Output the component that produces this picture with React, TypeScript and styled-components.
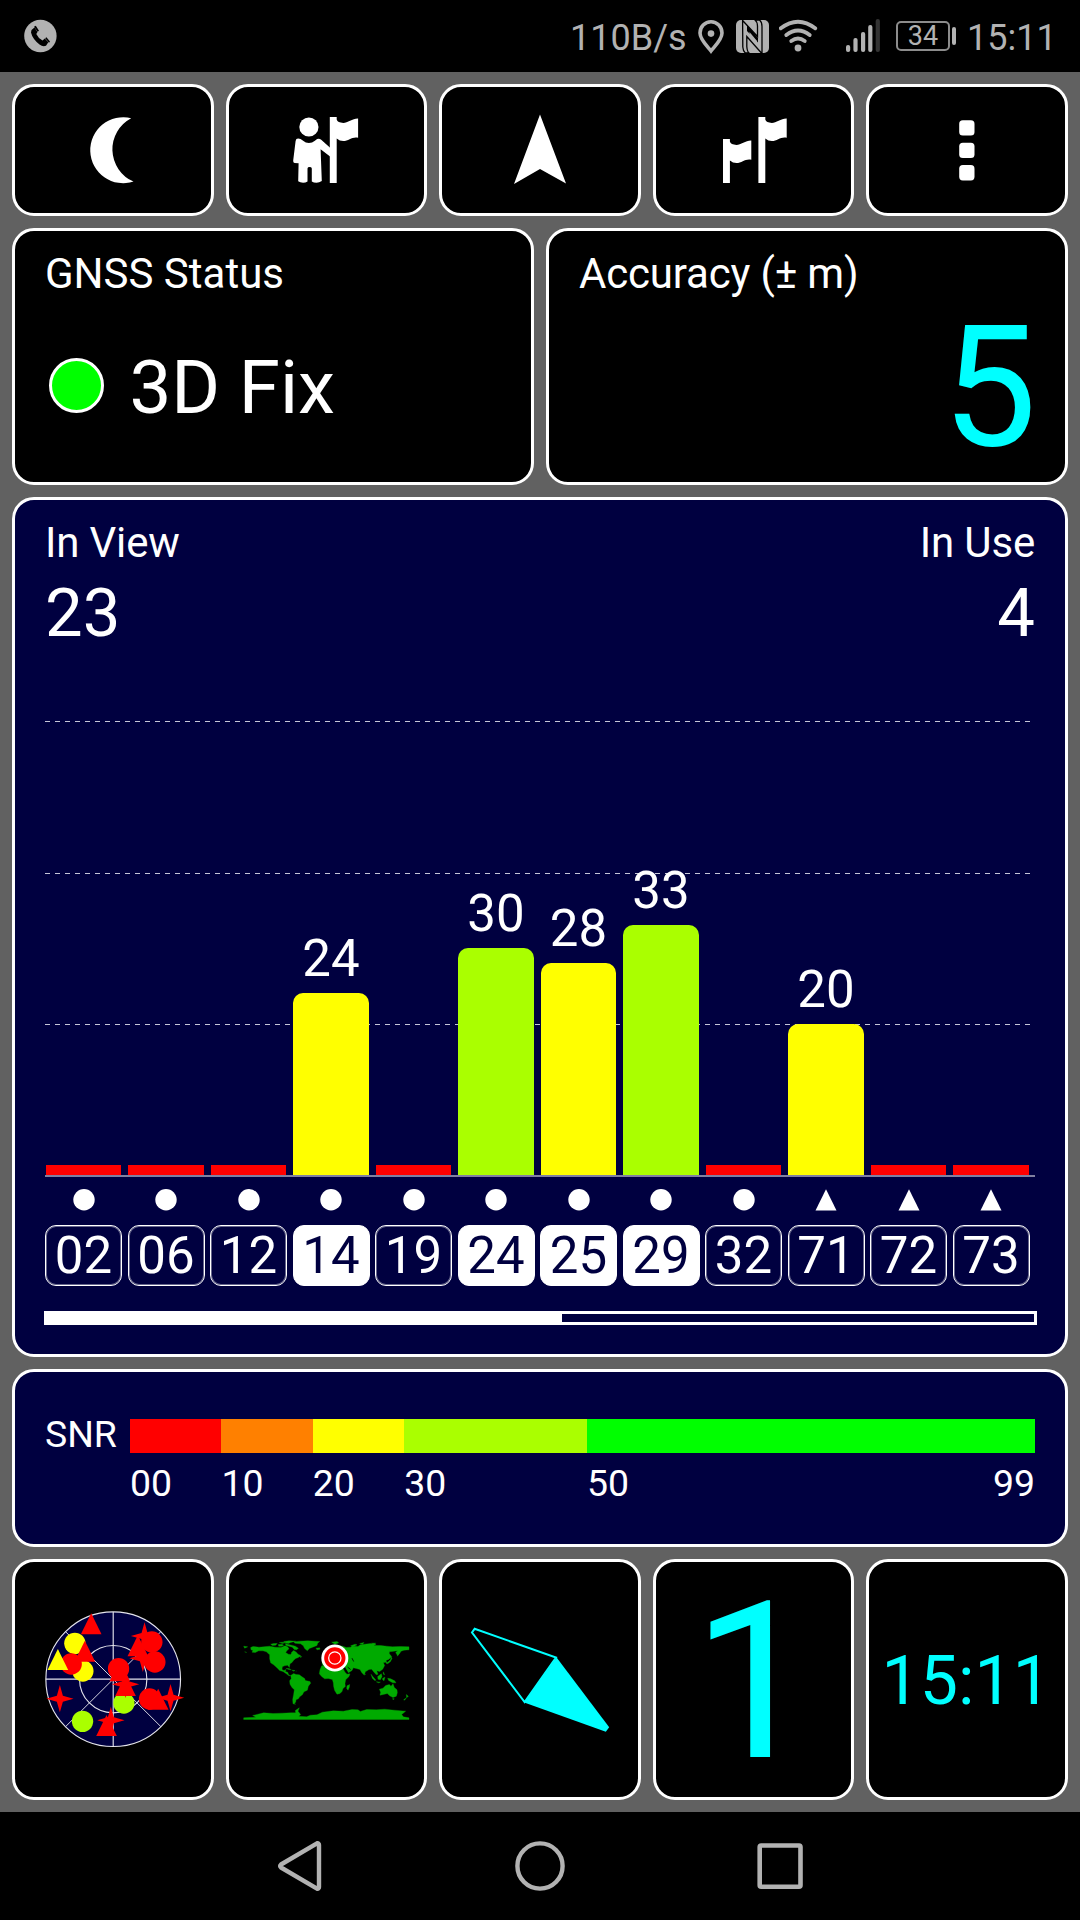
import React from "react";
import styled, { createGlobalStyle } from "styled-components";

const GlobalStyle = createGlobalStyle`
  *, *::before, *::after { box-sizing: border-box; }
  html, body { margin: 0; padding: 0; background: #000; }
`;

const NAVY = "#000040";
const CYAN = "#00ffff";
const GRAY = "#b2b2b2";

const Screen = styled.div`
  width: 1080px;
  height: 1920px;
  display: flex;
  flex-direction: column;
  background: #000;
  color: #fff;
  font-family: Roboto, "Liberation Sans", sans-serif;
  overflow: hidden;
`;

const StatusBar = styled.header`
  height: 72px;
  display: flex;
  align-items: center;
  justify-content: space-between;
  padding: 0 26px 0 24px;
  color: ${GRAY};
`;

const StatusGroup = styled.div`
  display: flex;
  align-items: center;
  height: 72px;
`;

const StatusText = styled.span<{ $width: number }>`
  width: ${(p) => p.$width}px;
  font-size: 36px;
  line-height: 72px;
  padding-top: 3px;
  white-space: nowrap;
`;

const Battery = styled.div`
  width: 54px;
  height: 30px;
  margin-left: 16px;
  border: 2px solid #8c8c8c;
  border-radius: 5px;
  font-size: 27px;
  line-height: 27px;
  text-align: center;
`;

const BatteryTip = styled.div`
  width: 4px;
  height: 18px;
  margin: 0 11px 0 2px;
  border-radius: 2px;
  background: ${GRAY};
`;

const Icon = styled.svg`
  display: block;
  flex: none;
`;

const Dashboard = styled.main`
  height: 1740px;
  padding: 12px;
  background: #616161;
  display: grid;
  grid-template-rows: 132px 257px 860px 178px 241px;
  row-gap: 12px;
`;

const Row = styled.div<{ $columns: number }>`
  display: grid;
  grid-template-columns: repeat(${(p) => p.$columns}, 1fr);
  column-gap: 12px;
`;

const Card = styled.section<{ $navy?: boolean }>`
  min-width: 0;
  border: 3px solid #fff;
  border-radius: 22px;
  background: ${(p) => (p.$navy ? NAVY : "#000")};
`;

const Tile = styled(Card)`
  display: flex;
  align-items: center;
  justify-content: center;
  color: ${CYAN};
`;

const InfoCard = styled(Card)`
  padding: 18px 30px 0;
  display: flex;
  flex-direction: column;
`;

const Title = styled.div<{ $tight?: boolean }>`
  font-size: 42px;
  line-height: 50px;
  letter-spacing: ${(p) => (p.$tight ? "-0.17px" : "0")};
  white-space: nowrap;
`;

const FixRow = styled.div`
  display: flex;
  align-items: center;
  margin-top: 55px;
  padding-left: 3.5px;
`;

const FixDot = styled.div`
  width: 55px;
  height: 55px;
  margin-right: 26px;
  border: 3px solid #fff;
  border-radius: 50%;
  background: #00ff00;
`;

const FixText = styled.div`
  font-size: 74.5px;
  line-height: 56px;
  padding-top: 6px;
`;

const AccuracyValue = styled.div`
  margin: 3px -2px 0 0;
  font-size: 169px;
  line-height: 170px;
  text-align: right;
  color: ${CYAN};
`;

const Counts = styled.div`
  display: flex;
  justify-content: space-between;
`;

const Count = styled.div<{ $end?: boolean }>`
  text-align: ${(p) => (p.$end ? "right" : "left")};
`;

const CountValue = styled.div`
  margin-top: 7px;
  font-size: 67px;
  line-height: 76px;
`;

const dashes =
  "repeating-linear-gradient(90deg, #c6c6d8 0 5px, transparent 5px 10px)";

const Plot = styled.div`
  height: 476px;
  margin-top: 50px;
  display: grid;
  grid-template-columns: repeat(12, 82.5px);
  align-items: end;
  border-bottom: 2px solid #8080a0;
  background-image: ${dashes}, ${dashes}, ${dashes};
  background-size: 985px 1px;
  background-position: 0 20px, 0 172px, 0 323px;
  background-repeat: no-repeat;
`;

const Slot = styled.div`
  width: 77px;
  display: flex;
  flex-direction: column;
  align-items: center;
`;

const BarValue = styled.div`
  font-size: 51px;
  line-height: 52px;
  margin-bottom: 8px;
`;

const Bar = styled.div<{ $color: string; $rounded: boolean }>`
  width: 75.5px;
  border-radius: ${(p) => (p.$rounded ? "10px 10px 0 0" : "0")};
  background: ${(p) => p.$color};
`;

const SatRow = styled.div<{ $gap: number }>`
  margin-top: ${(p) => p.$gap}px;
  display: grid;
  grid-template-columns: repeat(12, 82.5px);
`;

const SymbolCell = styled.div`
  width: 77px;
  display: flex;
  justify-content: center;
`;

const Chip = styled.div<{ $used: boolean }>`
  width: 77px;
  height: 61px;
  border: 1px solid #fff;
  box-shadow: inset 0 0 0 1px rgba(255, 255, 255, 0.4);
  border-radius: 11px;
  background: ${(p) => (p.$used ? "#fff" : "transparent")};
  color: ${(p) => (p.$used ? NAVY : "#fff")};
  font-size: 51px;
  line-height: 59px;
  text-align: center;
`;

const ScrollTrack = styled.div`
  width: 993px;
  height: 14px;
  margin: 25px 0 0 -1px;
  border: 3px solid #fff;
`;

const ScrollThumb = styled.div`
  width: 515px;
  height: 8px;
  background: #fff;
`;

const SnrCard = styled(Card)`
  padding: 47px 30px 0;
  display: grid;
  grid-template-columns: 85px 1fr;
  align-content: start;
  font-size: 37.4px;
`;

const SnrName = styled.div`
  line-height: 34px;
  margin-top: -2px;
`;

const SnrScale = styled.div`
  height: 34px;
  display: grid;
  grid-template-columns: 10fr 10fr 10fr 20fr 49fr;
`;

const SnrBand = styled.div<{ $color: string }>`
  background: ${(p) => p.$color};
`;

const SnrLabels = styled(SnrScale)`
  grid-column: 2;
  height: 40px;
  line-height: 40px;
  margin-top: 10px;
`;

const SnrLabel = styled.div`
  display: flex;
  justify-content: space-between;
`;

const BigDigit = styled.div`
  font-size: 218.5px;
  line-height: 219px;
  padding-top: 6px;
`;

const Clock = styled.div`
  font-size: 68px;
  line-height: 80px;
  padding: 2px 2px 0 0;
`;

const NavBar = styled.nav`
  height: 108px;
  display: flex;
  align-items: center;
  justify-content: space-between;
  padding: 0 270px;
`;

type Sat = { id: string; snr: number; used?: boolean; glonass?: boolean };

const sats: Sat[] = [
  { id: "02", snr: 0 },
  { id: "06", snr: 0 },
  { id: "12", snr: 0 },
  { id: "14", snr: 24, used: true },
  { id: "19", snr: 0 },
  { id: "24", snr: 30, used: true },
  { id: "25", snr: 28, used: true },
  { id: "29", snr: 33, used: true },
  { id: "32", snr: 0 },
  { id: "71", snr: 20, glonass: true },
  { id: "72", snr: 0, glonass: true },
  { id: "73", snr: 0, glonass: true },
];

const bands = [
  { color: "#ff0000", label: "00" },
  { color: "#ff8000", label: "10" },
  { color: "#ffff00", label: "20" },
  { color: "#aaff00", label: "30" },
  { color: "#00ff00", label: "50", end: "99" },
];

const snrColor = (v: number) =>
  v >= 30 ? "#aaff00" : v >= 20 ? "#ffff00" : "#ff0000";

const flagPath =
  "M330.2 117H337.1V119.5Q338 122.7 343.7 122.9C348 122.9 353 118.3 358.5 118.5V137.8C353 136.2 349 141 343.7 141Q340 141 337.1 138.5V183H330.2Z";

function PhoneIcon() {
  return (
    <Icon width="33" height="34" viewBox="24 19.5 33 34">
      <circle cx="40.4" cy="36.5" r="16.2" fill={GRAY} />
      <path d="M31.5 30.5L34.5 28L37.5 32.5L36.3 34.6Q38.3 39 42.5 41L44.8 39L48.3 42.7L46 46.2Q43 47.6 39.5 45Q32.5 39.5 31 33Z" fill="#000" />
      <path d="M34 27.3L35.8 26.2L39 31.2L37.6 32.2ZM45.2 38.8L46.4 37.8L50 42L49 43.2Z" fill="#000" />
    </Icon>
  );
}

function StatusIcons() {
  return (
    <>
      <Icon width="30" height="36" viewBox="696 18 30 36">
        <path d="M711 51C707 46 700 39.5 700 33A11 11.3 0 0 1 722 33C722 39.5 715 46 711 51Z" fill="none" stroke={GRAY} strokeWidth="3.6" />
        <circle cx="711" cy="33.6" r="3.3" fill={GRAY} />
      </Icon>
      <Icon width="53" height="36" viewBox="726 18 53 36">
        <rect x="736" y="20" width="33" height="33" rx="5" fill={GRAY} />
        <path d="M742.6 20.5L757.5 36.5V26Q757.2 21.5 755 20H759.5Q762 22 762 26.5V52.5H761L746.8 36.5V46.5Q747.2 51.5 749 53H745.3Q743 51 742.8 47Z" fill="none" stroke="#000" strokeWidth="1.3" />
        <path d="M747 25L758 38V42.5L747 31Z" fill="#000" />
        <path d="M749.5 32V36L757 44.5V41Z" fill={GRAY} />
      </Icon>
      <Icon width="67" height="36" viewBox="779 18 67 36">
        <g fill="none" stroke={GRAY} strokeWidth="3.9" strokeLinecap="round">
          <path d="M780.8 28.3Q798 15.2 815.2 28.3" />
          <path d="M786.3 35Q798 26 809.7 35" />
          <path d="M791.3 41Q798 36 804.7 41" />
        </g>
        <circle cx="798" cy="48" r="3.4" fill={GRAY} />
      </Icon>
      <Icon width="34" height="36" viewBox="846 18 34 36">
        <g fill={GRAY}>
          <rect x="846" y="45" width="4.2" height="7" rx="2" />
          <rect x="853.4" y="38" width="4.2" height="14" rx="2" />
          <rect x="861" y="32" width="4.2" height="20" rx="2" />
          <rect x="868.2" y="25" width="4.2" height="27" rx="2" />
          <rect x="875.7" y="19" width="4.2" height="33" rx="2" fill="#333" />
        </g>
      </Icon>
    </>
  );
}

function Toolbar() {
  return (
    <Row $columns={5}>
      <Tile>
        <Icon width="120" height="100" viewBox="52.8 100 120 100" fill="#fff">
          <path d="M131 118.2A33 33 0 1 0 133.3 181.6A35.2 35.2 0 0 1 131 118.2Z" />
        </Icon>
      </Tile>
      <Tile>
        <Icon width="120" height="100" viewBox="266.4 100 120 100" fill="#fff">
          <circle cx="309.3" cy="127" r="9.6" />
          <path d="M296 141Q296.3 138.6 298.5 138.6Q301 138.6 303.5 140.7Q306 143 309.3 143Q312.6 143 315.3 140.7L317.5 139Q319.6 138 321.6 139.7L330.8 148V156.7L321 149.3L322.2 181Q319.5 182.7 317 182.7Q314 182.7 312.2 181.5V168.4Q312 167 310 167Q308 167 307.9 168.4V181.5Q306 182.7 303.5 182.7Q300.5 182.7 298.6 181.3L299 163.2L295 163Q293.3 162.6 293.6 160.5Z" />
          <path d={flagPath} />
        </Icon>
      </Tile>
      <Tile>
        <Icon width="120" height="100" viewBox="480 100 120 100" fill="#fff">
          <path d="M540 114.5L566 183.5L540 169L514 184Z" />
        </Icon>
      </Tile>
      <Tile>
        <Icon width="120" height="100" viewBox="693.6 100 120 100" fill="#fff">
          <path d={flagPath} transform="translate(427.8 0)" />
          <path
            d="M330.2 117H337.1V119.5Q338 122.7 343.7 122.9C348 122.9 353 118.3 358.5 118.5V137.8C353 136.2 349 141 343.7 141Q340 141 337.1 138.5V161H330.2Z"
            transform="translate(392.4 22)"
          />
        </Icon>
      </Tile>
      <Tile>
        <Icon width="120" height="100" viewBox="907.2 100 120 100" fill="#fff">
          <rect x="959.4" y="120.3" width="15.3" height="15.3" rx="3.6" />
          <rect x="959.4" y="142.8" width="15.3" height="15.3" rx="3.6" />
          <rect x="959.4" y="165.1" width="15.3" height="15.3" rx="3.6" />
        </Icon>
      </Tile>
    </Row>
  );
}

type Mark = ["c" | "t" | "s", number, number, string?];

/* circle, triangle and four-pointed star markers, in drawing order */
const skyMarks: Mark[] = [
  ["c", 134, 160, "#ffff00"],
  ["c", 158, 243, "#ffff00"],
  ["t", 164, 184],
  ["c", 123, 222],
  ["t", 83, 209, "#ffff00"],
  ["t", 183, 102],
  ["s", 343, 138],
  ["t", 323, 168],
  ["c", 365, 156],
  ["s", 338, 205],
  ["c", 374, 216],
  ["t", 269, 243],
  ["c", 265, 236],
  ["c", 281, 339, "#aaff00"],
  ["s", 286, 283],
  ["t", 286, 287],
  ["c", 157, 394, "#aaff00"],
  ["s", 242, 391],
  ["t", 229, 407],
  ["s", 89, 326],
  ["t", 384, 328],
  ["c", 358, 327],
  ["s", 421, 323],
];

function SkyMark({ mark: [kind, x, y, color = "#ff0000"] }: { mark: Mark }) {
  if (kind === "c") return <circle cx={x} cy={y} r="32" fill={color} />;
  const d =
    kind === "t"
      ? "M0 -32L31 31H-31Z"
      : "M0 -41L9 -9L41 0L9 9L0 41L-9 9L-41 0L-9 -9Z";
  return <path d={d} transform={`translate(${x} ${y})`} fill={color} />;
}

function SkyPlot() {
  return (
    <Icon width="170" height="170" viewBox="-6.6 15 510 510">
      <circle cx="249" cy="267.5" r="202" fill={NAVY} />
      <g fill="none" stroke="#e4e4ec" strokeWidth="3.4">
        <circle cx="249" cy="267.5" r="202" />
        <circle cx="249" cy="267.5" r="101" />
        <path d="M249 66V469M47 267.5H451" />
        <path d="M106 125L392 410M106 410L392 125" strokeWidth="2.8" />
      </g>
      {skyMarks.map((m, i) => (
        <SkyMark key={i} mark={m} />
      ))}
    </Icon>
  );
}

function WorldMap() {
  return (
    <Icon width="190" height="120" viewBox="2 1.5 570 360">
      <g fill="#00aa00" stroke="#00aa00" strokeLinejoin="round">
        {/* North and Central America */}
        <path d="M61 84L68 81L86 83L100 82L118 80L134 83L152 84L164 79L172 82L176 88L170 93L166 99L174 104L182 105L184 98L190 93L198 98L203 104L211 108L204 114L196 117L190 122L185 129L179 133L177 144L172 137L162 139L156 142L155 150L161 153L167 150L165 156L172 158L175 166L181 168L176 169L168 163L158 156L148 153L140 145L130 136L121 130L118 118L118 106L108 97L98 94L85 94L75 99L65 98L68 93L62 91Z" />
        <path d="M121 74L130 72L141 72L136 77L126 78ZM144 75L155 74L160 77L154 80L145 80ZM147 69L158 68L165 70L157 72ZM166 72L174 75L184 77L195 80L204 86L199 91L192 90L186 83L176 80L166 77ZM160 66L176 64L196 65L181 69L174 72L165 70ZM40 80L52 82L43 86ZM43 97L49 99ZM207 111L214 111L212 114Z" />
        {/* Greenland and Iceland */}
        <path d="M190 67L208 65L232 64L268 66L262 71L260 78L247 83L237 87L231 94L223 87L219 79L211 73L194 71ZM257 86L268 85L269 89L260 91Z" />
        {/* Caribbean */}
        <path d="M167 147L176 147L183 151L175 150ZM185 152L194 153L190 155ZM196 155L199 155" />
        {/* South America */}
        <path d="M181 168L190 162L197 165L207 166L215 172L223 177L225 183L239 186L241 191L234 200L231 212L221 217L216 226L208 232L204 238L197 241L196 248L191 252L196 254L188 253L187 240L190 224L192 211L185 204L179 194L178 184L183 177Z" />
        {/* Africa */}
        <path d="M274 139L291 137L307 137L310 142L321 143L337 145L344 158L350 164L359 163L356 171L346 181L344 192L345 201L338 207L335 216L329 222L320 224L313 213L310 201L309 190L306 180L294 177L283 178L274 171L267 163L269 151ZM350 199L358 195L357 203L353 212L349 207Z" />
        {/* Europe and Asia */}
        <path d="M292 105L301 98L299 90L309 83L324 78L337 80L348 84L360 83L372 80L383 81L390 76L403 74L421 72L437 74L430 78L451 78L469 80L486 82L510 81L536 82L536 91L521 92L512 95L508 102L501 107L496 99L502 94L491 95L477 97L477 103L484 111L476 119L467 123L471 133L465 128L459 130L463 138L457 149L448 156L439 154L443 164L438 166L431 158L424 149L416 150L405 157L402 167L394 159L389 150L378 147L369 145L365 153L354 160L347 148L342 139L330 138L320 134L314 126L301 132L287 136L276 136L275 124L288 122L285 116Z" />
        <path d="M283 106L289 108L287 115L281 115ZM304 68L320 66L325 70L314 74ZM361 79L374 74L380 76L366 83ZM388 72L401 69L397 74ZM424 71L436 71L431 75ZM482 112L485 117L480 127L473 132L468 131L477 124L481 119ZM507 99L504 107L500 110Z" />
        {/* Islands and Oceania */}
        <path d="M422 164L428 172L437 182L433 183L426 176ZM438 187L450 188L445 190ZM442 171L453 163L455 171L450 181L443 179ZM457 176L464 173L461 184L457 181ZM459 157L463 166L459 164ZM472 176L481 178L493 184L497 190L487 190L475 183ZM403 163L406 166Z" />
        <path d="M447 209L458 206L466 198L477 195L482 200L488 193L492 204L500 211L501 220L498 230L488 234L478 229L471 222L459 225L449 227L451 218ZM487 237L492 238L488 241ZM528 225L534 230L529 235ZM528 235L523 242L520 241Z" />
        {/* Antarctica */}
        <path d="M40 295L77 293L67 288L83 284L100 280L128 282L155 281L181 280L196 280L195 273L207 265L203 275L211 285L205 290L229 292L240 287L260 286L276 278L309 274L339 275L365 270L383 271L390 276L409 270L438 271L463 269L492 272L526 275L514 285L519 292L536 295L536 300L40 300Z" />
      </g>
      {/* Black, Caspian and Red Sea, Persian Gulf */}
      <path d="M342 144L352 160M352 143L361 150M365 116L370 126" fill="none" stroke="#000" strokeWidth="2.5" />
      <circle cx="313.5" cy="115.5" r="40.5" fill="#fff" />
      <circle cx="313.5" cy="115.5" r="32" fill="#f00" />
      <circle cx="313.5" cy="115.5" r="18.5" fill="#f00" stroke="#fff" strokeWidth="3.6" />
    </Icon>
  );
}

export default function App() {
  return (
    <Screen>
      <GlobalStyle />
      <StatusBar>
        <PhoneIcon />
        <StatusGroup>
          <StatusText $width={126}>110B/s</StatusText>
          <StatusIcons />
          <Battery>34</Battery>
          <BatteryTip />
          <StatusText $width={87}>15:11</StatusText>
        </StatusGroup>
      </StatusBar>

      <Dashboard>
        <Toolbar />

        <Row $columns={2}>
          <InfoCard>
            <Title>GNSS Status</Title>
            <FixRow>
              <FixDot />
              <FixText>3D Fix</FixText>
            </FixRow>
          </InfoCard>
          <InfoCard>
            <Title $tight>Accuracy (± m)</Title>
            <AccuracyValue>5</AccuracyValue>
          </InfoCard>
        </Row>

        <InfoCard $navy>
          <Counts>
            <Count>
              <Title $tight>In View</Title>
              <CountValue>23</CountValue>
            </Count>
            <Count $end>
              <Title $tight>In Use</Title>
              <CountValue>4</CountValue>
            </Count>
          </Counts>
          <Plot>
            {sats.map((s) => (
              <Slot key={s.id}>
                {s.snr > 0 && <BarValue>{s.snr}</BarValue>}
                <Bar
                  $color={snrColor(s.snr)}
                  $rounded={s.snr > 0}
                  style={{ height: s.snr > 0 ? s.snr * 7.57 : 10 }}
                />
              </Slot>
            ))}
          </Plot>
          <SatRow $gap={12}>
            {sats.map((s) => (
              <SymbolCell key={s.id}>
                <Icon width="22" height="22" viewBox="0 0 22 22" fill="#fff">
                  {s.glonass ? (
                    <path d="M11 0.3L21.5 21.4H0.5Z" />
                  ) : (
                    <circle cx="11" cy="10.8" r="10.7" />
                  )}
                </Icon>
              </SymbolCell>
            ))}
          </SatRow>
          <SatRow $gap={14}>
            {sats.map((s) => (
              <Chip key={s.id} $used={!!s.used}>
                {s.id}
              </Chip>
            ))}
          </SatRow>
          <ScrollTrack>
            <ScrollThumb />
          </ScrollTrack>
        </InfoCard>

        <SnrCard $navy>
          <SnrName>SNR</SnrName>
          <SnrScale>
            {bands.map((b) => (
              <SnrBand key={b.label} $color={b.color} />
            ))}
          </SnrScale>
          <SnrLabels>
            {bands.map((b) => (
              <SnrLabel key={b.label}>
                <span>{b.label}</span>
                {b.end && <span>{b.end}</span>}
              </SnrLabel>
            ))}
          </SnrLabels>
        </SnrCard>

        <Row $columns={5}>
          <Tile>
            <SkyPlot />
          </Tile>
          <Tile>
            <WorldMap />
          </Tile>
          <Tile>
            <Icon width="160" height="160" viewBox="460 1599.5 160 160">
              <path d="M474.6 1628.3L472 1632L524.6 1701.6L556 1657Z" fill="none" stroke={CYAN} strokeWidth="2" />
              <path d="M556.6 1657L609.2 1726.7L605.8 1731.2L524.2 1702Z" fill={CYAN} />
            </Icon>
          </Tile>
          <Tile>
            <BigDigit>1</BigDigit>
          </Tile>
          <Tile>
            <Clock>15:11</Clock>
          </Tile>
        </Row>
      </Dashboard>

      <NavBar>
        <Icon width="60" height="60" viewBox="270 1836 60 60" fill="none" stroke={GRAY} strokeWidth="4.4" strokeLinejoin="round">
          <path d="M281 1864.5L317 1843.3Q319 1843 319 1845V1887Q319 1889 317 1888.7L281 1867.5Q279.5 1866 281 1864.5Z" />
        </Icon>
        <Icon width="60" height="60" viewBox="510 1836 60 60" fill="none" stroke={GRAY} strokeWidth="4.4">
          <circle cx="540" cy="1866" r="22.6" />
        </Icon>
        <Icon width="60" height="60" viewBox="750 1836 60 60" fill="none" stroke={GRAY} strokeWidth="4.6">
          <rect x="759.7" y="1845.5" width="40.8" height="41.2" rx="1.5" />
        </Icon>
      </NavBar>
    </Screen>
  );
}
